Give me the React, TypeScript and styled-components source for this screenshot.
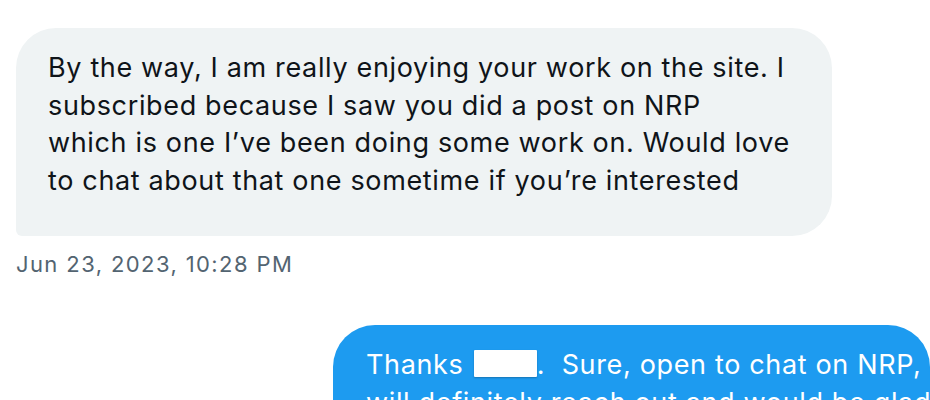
import React from "react";
import styled, { createGlobalStyle } from "styled-components";

const Global = createGlobalStyle`
  html, body { margin: 0; padding: 0; background: #ffffff; }
  body { font-family: Inter, "Noto Sans", Arial, sans-serif; -webkit-font-smoothing: antialiased; }
`;

const Page = styled.div`
  width: 930px;
  height: 400px;
  overflow: hidden;
  display: flex;
  flex-direction: column;
  padding: 28px 0 0 16px;
  box-sizing: border-box;
`;

const Received = styled.div`
  display: flex;
  flex-direction: column;
  align-items: flex-start;
`;

const Bubble = styled.div<{ $mine?: boolean }>`
  box-sizing: border-box;
  font-size: 27px;
  line-height: 37.7px;
  letter-spacing: 0.65px;
  padding: 21px 30px 36px 32px;
  white-space: nowrap;
  color: ${(p) => (p.$mine ? "#ffffff" : "#0f1419")};
  background: ${(p) => (p.$mine ? "#1d9bf0" : "#eff3f4")};
  border-radius: ${(p) => (p.$mine ? "42px 42px 0 42px" : "40px 40px 40px 6px")};
`;

const ReceivedBubble = styled(Bubble)`
  width: 816px;
`;

const Meta = styled.div`
  margin-top: 14px;
  font-size: 22px;
  line-height: 28px;
  letter-spacing: 1.4px;
  color: #536471;
`;

const Sent = styled.div`
  margin-top: 47px;
  display: flex;
  justify-content: flex-end;
`;

const SentBubble = styled(Bubble)`
  width: 597px;
  padding-left: 33px;
  padding-right: 0;
`;

const Redact = styled.span`
  display: inline-block;
  width: 63px;
  height: 27px;
  background: #ffffff;
  vertical-align: -3px;
  margin-left: 2px;
  border-radius: 1px;
  box-shadow: 0 1px 2px rgba(0, 0, 0, 0.25);
`;

const lines = [
  "By the way, I am really enjoying your work on the site. I",
  "subscribed because I saw you did a post on NRP",
  "which is one I’ve been doing some work on. Would love",
  "to chat about that one sometime if you’re interested",
];

export default function App() {
  return (
    <>
      <Global />
      <Page>
        <Received>
          <ReceivedBubble>
            {lines.map((l, i) => (
              <React.Fragment key={i}>
                {l}
                {i < lines.length - 1 && <br />}
              </React.Fragment>
            ))}
          </ReceivedBubble>
          <Meta>Jun 23, 2023, 10:28 PM</Meta>
        </Received>
        <Sent>
          <SentBubble $mine>
            Thanks <Redact />.&nbsp; Sure, open to chat on NRP,
            <br />
            will definitely reach out and would be glad if you
          </SentBubble>
        </Sent>
      </Page>
    </>
  );
}
